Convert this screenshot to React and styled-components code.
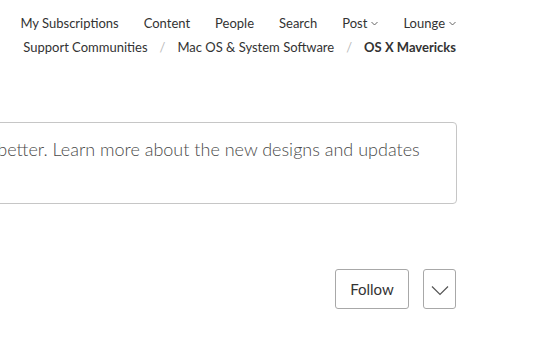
import styled, { createGlobalStyle } from "styled-components";

const Global = createGlobalStyle`
  html, body {
    margin: 0;
    padding: 0;
    background: #fff;
    overflow: hidden;
  }
  body {
    font-family: Lato, "Open Sans", sans-serif;
    color: #333;
  }
`;

export default function App() {
  return (
    <>
      <Global />
      <Page>
        <TopNav>
          <NavLink>My Subscriptions</NavLink>
          <NavLink>Content</NavLink>
          <NavLink>People</NavLink>
          <NavLink>Search</NavLink>
          <NavLink>Post<Caret /></NavLink>
          <NavLink>Lounge<Caret /></NavLink>
        </TopNav>
        <Crumbs>
          <Crumb>Support Communities</Crumb>
          <Sep>/</Sep>
          <Crumb>Mac OS &amp; System Software</Crumb>
          <Sep>/</Sep>
          <Crumb $current>OS X Mavericks</Crumb>
        </Crumbs>
        <Notice>
          We've redesigned Apple Support Communities to make it better. Learn more about the new designs and updates
        </Notice>
        <Actions>
          <FollowButton>Follow</FollowButton>
          <MenuButton aria-label="More">
            <svg width="18" height="11" viewBox="0 0 18 11" fill="none">
              <path d="M1 1.5 L9 9.5 L17 1.5" stroke="#555" strokeWidth="1.2" />
            </svg>
          </MenuButton>
        </Actions>
      </Page>
    </>
  );
}

function Caret() {
  return (
    <svg width="7" height="5" viewBox="0 0 7 5" fill="none" style={{ marginLeft: 4 }}>
      <path d="M0.5 1 L3.5 4 L6.5 1" stroke="#555" strokeWidth="0.9" />
    </svg>
  );
}

const Page = styled.div`
  width: 456px;
  padding-top: 14px;
`;

const TopNav = styled.nav`
  display: flex;
  justify-content: flex-end;
  gap: 25px;
  height: 18px;
  align-items: center;
`;

const NavLink = styled.a`
  display: inline-flex;
  align-items: center;
  font-size: 13px;
  color: #333;
  white-space: nowrap;
`;

const Crumbs = styled.div`
  display: flex;
  justify-content: flex-end;
  align-items: center;
  margin-top: 6px;
  height: 18px;
  font-size: 13px;
`;

const Crumb = styled.span`
  white-space: nowrap;
  color: #333;
  font-weight: ${(p) => (p.$current ? 700 : 400)};
`;

const Sep = styled.span`
  color: #bbb;
  margin: 0 12px;
`;

const Notice = styled.div`
  box-sizing: border-box;
  width: 928px;
  margin-left: -471px;
  margin-top: 66px;
  height: 82px;
  padding: 13px 20px 0 20px;
  border: 1px solid #c6c6c6;
  border-radius: 4px;
  font-size: 18px;
  font-weight: 300;
  line-height: 26px;
  color: #4a4a4a;
  white-space: nowrap;
  overflow: hidden;
`;

const Actions = styled.div`
  display: flex;
  justify-content: flex-end;
  gap: 14px;
  margin-top: 65px;
`;

const ButtonBase = styled.button`
  box-sizing: border-box;
  height: 40px;
  background: #fff;
  border: 1px solid #a8a8a8;
  border-radius: 3px;
  font-family: inherit;
  color: #333;
  cursor: pointer;
  display: flex;
  align-items: center;
  justify-content: center;
  padding: 0;
`;

const FollowButton = styled(ButtonBase)`
  width: 74px;
  font-size: 15px;
`;

const MenuButton = styled(ButtonBase)`
  width: 33px;
  padding-top: 3px;
`;
